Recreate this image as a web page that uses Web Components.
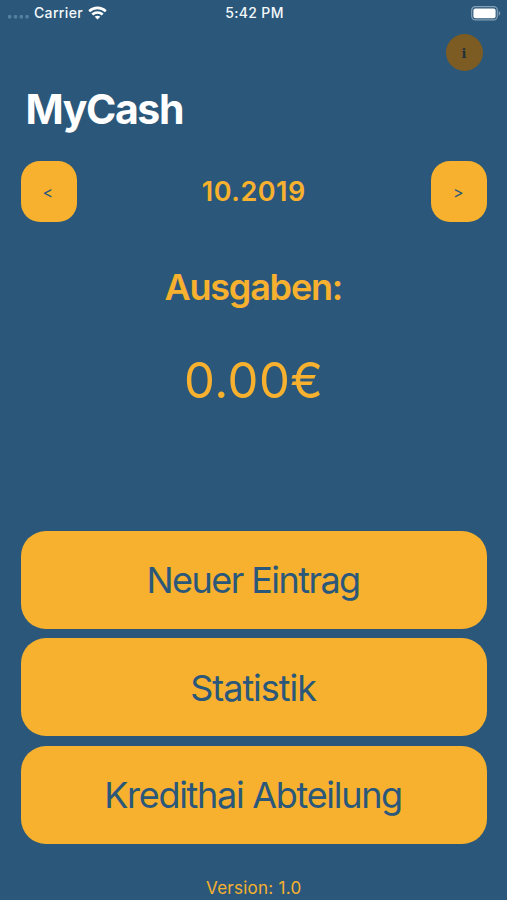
<!DOCTYPE html>
<html lang="de">
<head>
  <meta charset="UTF-8">
  <meta name="viewport" content="width=device-width, initial-scale=1.0">
  <title>MyCash</title>
  <style>
    :root {
      --blue: #2b587a;
      --yellow: #f7b12f;
      --brown: #7c5c22;
    }

    body {
      margin: 0;
      background-color: var(--blue);
      font-family: Inter, "Liberation Sans", sans-serif;
    }
  </style>
</head>
<body>
  <my-cash></my-cash>

  <script>
    class StatusBar extends HTMLElement {
      constructor() {
        super()
        this.attachShadow({ mode: "open" })
      }

      static get styles() {
        return `
          :host {
            display: grid;
            grid-template-columns: 1fr auto 1fr;
            align-items: center;
            height: 26px;
            padding: 0 6px 0 8px;
            color: #f4f8fb;
            font-size: 14px;
            font-weight: 500;
            letter-spacing: .35px;
            line-height: 26px;
          }

          .status__left {
            display: flex;
            align-items: center;
          }

          .status__dots {
            margin: 8px 5px 0 0;
          }

          .status__wifi {
            margin-left: 4.5px;
          }

          .status__battery {
            justify-self: end;
          }

          svg {
            display: block;
          }
        `
      }

      connectedCallback() {
        this.render()
      }

      render() {
        this.shadowRoot.innerHTML = `
          <style>${StatusBar.styles}</style>
          <div class="status__left">
            <svg class="status__dots" width="21" height="4" fill="#5580a0">
              <rect x="0" width="3.4" height="3.4" rx="1"/>
              <rect x="5.8" width="3.4" height="3.4" rx="1"/>
              <rect x="11.6" width="3.4" height="3.4" rx="1"/>
              <rect x="17.4" width="3.4" height="3.4" rx="1"/>
            </svg>
            <span class="status__carrier">Carrier</span>
            <svg class="status__wifi" width="19" height="14" viewBox="0 0 19 14" fill="none" stroke="#fff" stroke-width="2.6">
              <path d="M1.2 5.2C5.9 .8 13.1 .8 17.8 5.2"/>
              <path d="M4.3 8.5C7.3 5.8 11.7 5.8 14.7 8.5"/>
              <path d="M9.5 13.6L6.7 10.8C8.3 9.3 10.7 9.3 12.3 10.8Z" fill="#fff" stroke="none"/>
            </svg>
          </div>
          <span class="status__time">5:42 PM</span>
          <svg class="status__battery" width="30" height="15" viewBox="0 0 30 15">
            <rect x=".7" y=".7" width="25.6" height="13.2" rx="3.6" fill="none" stroke="#84a0b6" stroke-width="1.2"/>
            <rect x="2.4" y="2.4" width="22.2" height="9.8" rx="2" fill="#fff"/>
            <path d="M27.7 4.9C29.7 5.8 29.7 8.8 27.7 9.7Z" fill="#84a0b6"/>
          </svg>
        `
      }
    }

    class CashButton extends HTMLElement {
      constructor() {
        super()
        this.attachShadow({ mode: "open" })
      }

      static get styles() {
        return `
          :host {
            display: block;
            height: 97.7px;
            font-size: 36px;
          }

          :host([small]) {
            width: 56px;
            height: 61px;
            font-size: 16px;
          }

          :host([round]) {
            width: 37px;
            height: 37px;
            font-size: 13px;
          }

          .button {
            display: flex;
            justify-content: center;
            align-items: center;
            box-sizing: border-box;
            width: 100%;
            height: 100%;
            padding: 1px 1.4px 0 0;
            border: 0;
            border-radius: 25px;
            background-color: var(--yellow);
            color: var(--blue);
            font: inherit;
            letter-spacing: inherit;
          }

          :host([small]) .button {
            border-radius: 19px;
          }

          :host([round]) .button {
            padding: 2px 0 0;
            border-radius: 50%;
            background-color: var(--brown);
            color: #20303a;
            font-family: "DejaVu Serif", serif;
            font-weight: 700;
          }
        `
      }

      connectedCallback() {
        this.render()
      }

      render() {
        this.shadowRoot.innerHTML = `
          <style>${CashButton.styles}</style>
          <button class="button"><slot></slot></button>
        `
      }
    }

    class MonthPicker extends HTMLElement {
      constructor() {
        super()
        this.attachShadow({ mode: "open" })
      }

      static get styles() {
        return `
          :host {
            display: flex;
            justify-content: space-between;
            align-items: center;
            color: var(--yellow);
          }

          .month {
            font-size: 27px;
            font-weight: 600;
            letter-spacing: .5px;
            line-height: 32px;
          }
        `
      }

      connectedCallback() {
        this.render()
      }

      render() {
        this.shadowRoot.innerHTML = `
          <style>${MonthPicker.styles}</style>
          <cash-button small>&lt;</cash-button>
          <span class="month"><slot></slot></span>
          <cash-button small>&gt;</cash-button>
        `
      }
    }

    class MyCash extends HTMLElement {
      constructor() {
        super()
        this.attachShadow({ mode: "open" })
      }

      static get styles() {
        return `
          :host {
            display: flex;
            flex-direction: column;
            height: 900px;
            overflow: hidden;
            color: var(--yellow);
          }

          .main {
            display: flex;
            flex-direction: column;
            flex: 1;
            padding: 8px 20px 0 20.5px;
          }

          .main__info {
            align-self: flex-end;
            margin-right: 4.5px;
          }

          .main__title {
            margin: 13px 0 0 5px;
            color: #fff;
            font-size: 41px;
            font-weight: 700;
            letter-spacing: -1.4px;
            line-height: 50px;
          }

          .main__month {
            margin-top: 27px;
          }

          .main__label {
            margin: 43px 0 0;
            padding-right: 1px;
            font-size: 36px;
            font-weight: 600;
            letter-spacing: -1.2px;
            line-height: 44px;
            text-align: center;
          }

          .main__amount {
            margin: 42px 0 0;
            font-size: 49px;
            letter-spacing: .5px;
            line-height: 60px;
            text-align: center;
          }

          .main__actions {
            display: flex;
            flex-direction: column;
            gap: 9.8px;
            margin-top: 120px;
          }

          .main__new {
            letter-spacing: -1.55px;
          }

          .main__stats {
            letter-spacing: -1.05px;
          }

          .main__loans {
            letter-spacing: -1.3px;
          }

          .main__version {
            margin: 34px 0 0;
            font-size: 17px;
            letter-spacing: .25px;
            line-height: 20px;
            text-align: center;
          }
        `
      }

      connectedCallback() {
        this.render()
      }

      render() {
        this.shadowRoot.innerHTML = `
          <style>${MyCash.styles}</style>
          <status-bar></status-bar>
          <main class="main">
            <cash-button class="main__info" round>i</cash-button>
            <h1 class="main__title">MyCash</h1>
            <month-picker class="main__month">10.2019</month-picker>
            <h2 class="main__label">Ausgaben:</h2>
            <p class="main__amount">0.00€</p>
            <div class="main__actions">
              <cash-button class="main__new">Neuer Eintrag</cash-button>
              <cash-button class="main__stats">Statistik</cash-button>
              <cash-button class="main__loans">Kredithai Abteilung</cash-button>
            </div>
            <p class="main__version">Version: 1.0</p>
          </main>
        `
      }
    }

    customElements.define("status-bar", StatusBar)
    customElements.define("cash-button", CashButton)
    customElements.define("month-picker", MonthPicker)
    customElements.define("my-cash", MyCash)
  </script>
</body>
</html>
